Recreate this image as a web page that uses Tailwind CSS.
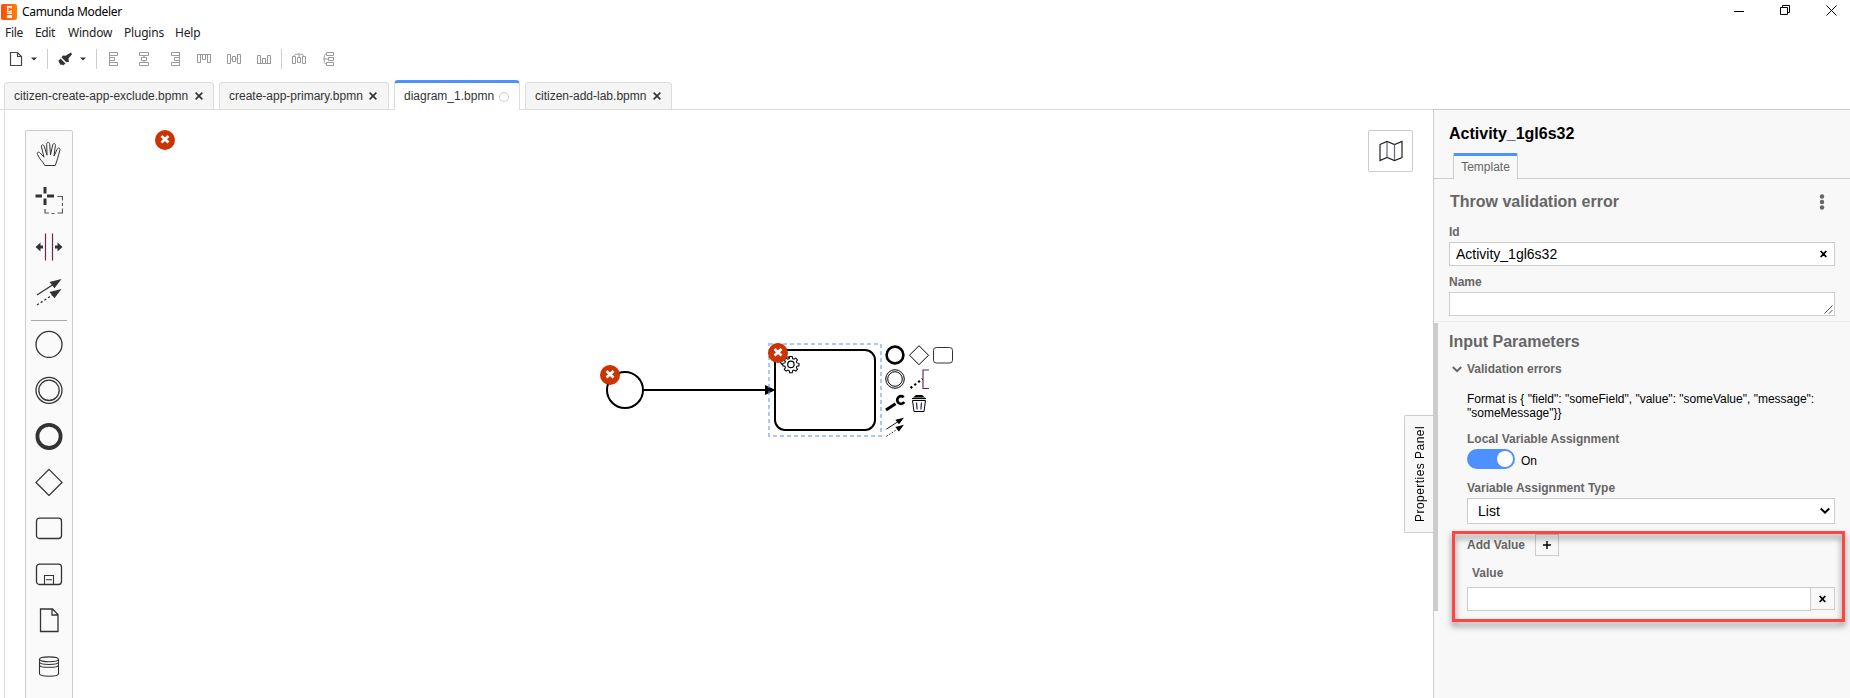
<!DOCTYPE html>
<html lang="en">
<head>
<meta charset="utf-8">
<title>Camunda Modeler</title>
<script src="https://cdn.jsdelivr.net/npm/@tailwindcss/browser@4"></script>
</head>
<body class="w-[1850px] h-[698px] overflow-hidden bg-white font-['Liberation_Sans',Arial,sans-serif] text-xs text-[#444] flex flex-col">
<svg class="hidden">
  <symbol id="err" viewBox="0 0 20 20"><circle cx="10" cy="10" r="10" fill="#cc3300" stroke="none"/><path d="M6.500 6l7 6.600M13.500 6l-7 6.600" stroke="#fff" stroke-width="2.700"/></symbol>
  <symbol id="connect" viewBox="0 0 28 28"><path d="M2 17L19 6" stroke="#333" stroke-width="1.3"/><path d="M26.500 1L14.500 4l5 6.200z" fill="#333" stroke="none"/><path d="M2 27L19 16" stroke="#333" stroke-width="1.300" stroke-dasharray="2.200 2.200"/><path d="M26.500 11L14.500 14l5 6.200z" fill="#333" stroke="none"/></symbol>
  <symbol id="close" viewBox="0 0 8 8"><path d="M.6 .6l6.800 6.800M7.400 .6L.6 7.400" stroke="#333" stroke-width="1.600"/></symbol>
</svg>

<!-- Title bar -->
<header class="h-[22px] flex items-center pl-[1px] text-black font-['Noto_Sans',sans-serif]">
  <svg width="16" height="16" viewBox="0 0 16 16" class="mt-px"><defs><linearGradient id="lg" x1="0" x2="1"><stop offset="0" stop-color="#ff4a0a"/><stop offset="1" stop-color="#ff8000"/></linearGradient></defs><rect width="16" height="16" rx="2" fill="url(#lg)"/><path d="M10.200 4.500V2.700H6.700v5h3.500V6.200" fill="none" stroke="#fff" stroke-width="1.400"/><path d="M6 9.500h5M6.500 11.500h4v2h-4z" stroke="#fff" stroke-width="1" fill="#fff"/></svg>
  <span class="ml-[5px] w-[110px] whitespace-nowrap text-[12px] tracking-[-0.330px] pt-px">Camunda Modeler</span>
  <div class="ml-auto flex items-center gap-[35px] pr-[13px] -mt-px">
    <svg width="10" height="11" viewBox="0 0 10 11"><path d="M0 6.500h10" stroke="#000"/></svg>
    <svg width="11" height="11" viewBox="0 0 11 11" fill="none" stroke="#000" class="ml-[1px]"><path d="M.5 2.500h7v7h-7z M2.500 2.500v-2h7v7h-2"/></svg>
    <svg width="11" height="11" viewBox="0 0 11 11" stroke="#000"><path d="M.5 .5l10 10M10.500 .5l-10 10"/></svg>
  </div>
</header>

<!-- Menu -->
<nav class="h-[22px] flex items-center pl-[5px] text-[12px] text-[#222] font-['Noto_Sans',sans-serif]">
  <span class="w-[30px] tracking-[-0.300px]">File</span><span class="w-[33px] tracking-[-0.400px]">Edit</span><span class="w-[56px] tracking-[-0.200px]">Window</span><span class="w-[51px] tracking-[-0.200px]">Plugins</span><span class="tracking-[-0.200px]">Help</span>
</nav>

<!-- Toolbar -->
<div class="h-[36px] shrink-0">
  <svg width="340" height="36" viewBox="0 44 340 36" fill="none" stroke="#999" stroke-width="1">
    <path d="M10.500 52.500h7l4 4v9h-11zM17.500 52.500v4h4" stroke="#444" stroke-width="1.200"/>
    <path d="M31 57.500h6l-3 3z M80 57.500h6l-3 3z" fill="#333" stroke="none"/>
    <path d="M47.500 49v20M96.500 49v20M281.500 49v20" stroke="#ccc"/>
    <path d="M71 52.500l1 1.700-3.600 4.300 .6 3.200-2.600.6-4.800-4.800 1.200-2 2.700.3z" fill="#333" stroke="none"/>
    <path d="M60.500 58.500l5 5-2.500 2-4.400-4.800zM58.500 60l3.500 4.600-1.400.4-2-3.600z" fill="#333" stroke="none"/>
    <path d="M109.500 52v14M109.500 52.500h8v3h-8M109.500 57.500h5v3h-5M109.500 62.500h8v3h-8"/>
    <path d="M139.500 52.500h9v3h-9zM141.500 57.500h5v3h-5zM139.500 62.500h9v3h-9zM144 55.500v2M144 60.500v2"/>
    <path d="M179.500 52v14M179.500 52.500h-8v3h8M179.500 57.500h-5v3h5M179.500 62.500h-8v3h8"/>
    <path d="M197 54.500h14M197.500 54.500v8h3v-8M202.500 54.500v5h3v-5M207.500 54.500v8h3v-8"/>
    <path d="M227.500 54.500h3v9h-3zM232.500 56.500h3v5h-3zM237.500 54.500h3v9h-3zM230.500 59h2M235.500 59h2"/>
    <path d="M257 63.500h14M257.500 63.500v-8h3v8M262.500 63.500v-5h3v5M267.500 63.500v-8h3v8"/>
    <path d="M292.500 56.500h3v7h-3zM297.500 57.500h3v5h-3zM302.500 56.500h3v7h-3zM294 56.500q0-2.500 5-2.500t5 2.500M299 54v3.500"/>
    <path d="M326.500 52.500h7v3h-7zM328.500 57.500h5v3h-5zM326.500 62.500h7v3h-7zM326.500 54q-2.500 0-2.500 5t2.500 5M324 59h4.500"/>
  </svg>
</div>

<!-- Tabs -->
<div class="h-[30px] shrink-0 flex items-end pl-1 gap-[5px] border-b border-[#ddd] text-[#333] whitespace-nowrap">
  <div class="w-[210px] h-[27px] bg-[#f5f5f5] border border-b-0 border-[#ddd] rounded-t-sm flex items-center pl-[9px]"><span class="w-[181px]">citizen-create-app-exclude.bpmn</span><svg width="8" height="8"><use href="#close"/></svg></div>
  <div class="w-[170px] h-[27px] bg-[#f5f5f5] border border-b-0 border-[#ddd] rounded-t-sm flex items-center pl-[9px]"><span class="w-[140px]">create-app-primary.bpmn</span><svg width="8" height="8"><use href="#close"/></svg></div>
  <div class="w-[126px] h-[30px] -mb-px bg-white border border-b-0 border-t-[3px] border-[#ddd] border-t-[#4d90ff] rounded-t-sm flex items-center pl-[9px] pb-px"><span class="w-[95px]">diagram_1.bpmn</span><i class="size-[10px] rounded-full border border-[#ccc] mt-px"></i></div>
  <div class="w-[147px] h-[27px] bg-[#f5f5f5] border border-b-0 border-[#ddd] rounded-t-sm flex items-center pl-[9px]"><span class="w-[118px]">citizen-add-lab.bpmn</span><svg width="8" height="8"><use href="#close"/></svg></div>
</div>

<main class="flex flex-1 min-h-0 pl-1">
  <!-- Diagram canvas -->
  <section class="relative flex-1 border-l border-[#ddd] overflow-hidden">
    <div class="absolute left-[20px] top-5 w-[48px] h-[600px] bg-[#fafafa] border border-[#ccc] rounded-xs flex flex-col items-center">
      <div class="h-[46px] flex items-center"><svg width="28" height="28" viewBox="0 0 28 28" fill="none" stroke="#333" stroke-width="1" stroke-linejoin="round"><path d="M9.800 25.500C8 21.500 5 20 2.500 14.500c-1-2 1.300-3.300 2.800-1.400L9 17.200 6.500 7c-.6-2.400 2-3 2.700-.8l2.800 9L11.700 4.300c0-2.500 2.900-2.500 3 0l.8 10.600L17.700 5c.5-2.200 3-1.700 2.700.5L19 16l3.200-6.800c1-2 3.200-1.200 2.700.9C23.500 15.500 22 21 20.200 25.500z"/></svg></div>
      <div class="h-[46px] flex items-center"><svg width="28" height="28" viewBox="0 0 28 28" fill="none" stroke="#333"><path d="M.5 10h6.500M12 10h7M10 1v6.500M10 12.500v6.500" stroke-width="3"/><path d="M22.500 10.500h5v4M27.500 17v3M27.500 22.500v4.500h-5M19.500 27.500h-3M14 27h-4v-4" stroke-width="1.200" stroke="#555"/></svg></div>
      <div class="h-[46px] flex items-center pt-px"><svg width="28" height="28" viewBox="0 0 28 28"><path d="M10.500 .5v27M17.500 .5v27" stroke="#702650" stroke-width="1.200"/><path d="M.5 14l5-4.500v3H8v3H5.500v3zM27.500 14l-5-4.500v3H20v3h2.500v3z" fill="#333"/></svg></div>
      <div class="h-[46px] flex items-center"><svg width="28" height="28"><use href="#connect"/></svg></div>
      <div class="w-[36px] h-px bg-[#aaa] mt-[5px]"></div>
      <div class="h-[46px] flex items-center"><svg width="28" height="28" fill="none" stroke="#333"><circle cx="14" cy="14.400" r="13" stroke-width="1.300"/></svg></div>
      <div class="h-[46px] flex items-center"><svg width="28" height="28" fill="none" stroke="#333"><circle cx="14" cy="14.300" r="13" stroke-width="1.300"/><circle cx="14" cy="14.300" r="10.200" stroke-width="1.300"/></svg></div>
      <div class="h-[46px] flex items-center"><svg width="28" height="28" fill="none" stroke="#333"><circle cx="14" cy="14.400" r="11.600" stroke-width="3.800"/></svg></div>
      <div class="h-[46px] flex items-center"><svg width="28" height="28" fill="none" stroke="#333"><path d="M14 1.400l13 13-13 13-13-13z" stroke-width="1.300"/></svg></div>
      <div class="h-[46px] flex items-center"><svg width="28" height="28" fill="none" stroke="#333"><rect x="1.500" y="4.200" width="25" height="20.300" rx="3" stroke-width="1.300"/></svg></div>
      <div class="h-[46px] flex items-center"><svg width="28" height="28" fill="none" stroke="#333" stroke-width="1.300"><rect x="1.500" y="4.200" width="25" height="20.300" rx="3"/><path d="M9.500 24.500v-9h9v9M11 19.700h6" stroke-width="1.100"/></svg></div>
      <div class="h-[46px] flex items-center"><svg width="28" height="28" fill="none" stroke="#333"><path d="M5.500 3h12l5.500 5.500v17H5.500zM17 3v6h6" stroke-width="1.300"/></svg></div>
      <div class="h-[46px] flex items-center"><svg width="28" height="28" fill="none" stroke="#333"><path d="M4.500 7.300v14.500c0 3.300 19 3.300 19 0V7.300M4.500 7.300c0-3.200 19-3.200 19 0s-19 3.200-19 0M4.500 10.100c0 3.200 19 3.200 19 0M4.500 12.900c0 3.200 19 3.200 19 0" stroke-width="1.100"/></svg></div>
    </div>

    <svg class="absolute left-[-1px] top-0" width="1400" height="588" viewBox="4 110 1400 588" fill="none" stroke="#000">
      <circle cx="625" cy="390" r="18" stroke-width="2" fill="#fff"/>
      <path d="M643 390h125" stroke-width="2"/>
      <path d="M765 385l10.500 5-10.500 5z" fill="#000" stroke="none"/>
      <rect x="775" y="350" width="100" height="80" rx="10" stroke-width="2"/>
      <rect x="769" y="344" width="112" height="92" stroke="#4d90ff" stroke-opacity=".5" stroke-width="2" stroke-dasharray="4 3"/>
      <g stroke-width="1.200" fill="#fff">
        <path d="M782.500 365l-2-2.500 1.500-2.500 2.500.6 1-.6.500-3h3l.6 2.500 1.500.8 2.400-.8"/>
        <path transform="translate(790.900 364.400) scale(.87) translate(-790.900 -365.800)" d="M789.400 356.800h3l.5 2.300 1.500.7 2-1.200 2 2-1.200 2 .6 1.500 2.400.5v2.900l-2.400.5-.6 1.500 1.300 2-2 2-2.100-1.200-1.500.6-.5 2.400h-3l-.5-2.400-1.500-.6-2 1.200-2.100-2 1.300-2-.6-1.500-2.400-.5v-2.900l2.400-.5.6-1.500-1.300-2 2.100-2 2 1.200 1.500-.7z"/>
        <circle cx="790.900" cy="364.400" r="3.200"/>
      </g>
      <svg x="155" y="130" width="20" height="20"><use href="#err"/></svg>
      <svg x="600" y="365" width="20" height="20"><use href="#err"/></svg>
      <svg x="768" y="343" width="20" height="20"><use href="#err"/></svg>
      <circle cx="895" cy="355" r="8.400" stroke-width="2.600"/>
      <path d="M919 345.700l9.500 9.500-9.500 9.500-9.500-9.500z"/>
      <rect x="933.500" y="347.500" width="19" height="15.500" rx="2.800" stroke="#333"/>
      <circle cx="895" cy="379" r="9.300"/><circle cx="895" cy="379" r="7.300"/>
      <path d="M929 370h-6v18.500h6" stroke="#502650" stroke-width="1.100"/><path d="M910.500 388l12-9" stroke-width="2.200" stroke-dasharray="2.200 2.600"/>
      <path d="M886 410l9.500-6.300" stroke-width="3"/><path d="M903.700 397.300a3.800 3.800 0 1 0 .5 4.800" stroke-width="2.700"/>
      <path d="M912.500 400.500h13l-1.500 11h-10z"/><path d="M912 398.500h14" stroke-width="1.200"/><path d="M913 397.500l3-2.500h6l3 2.500z" fill="#000" stroke="none"/><path d="M916.500 402.500l.6 7M921.500 402.500l-.6 7" stroke-width="1.300" stroke="#335"/>
      <svg x="885" y="417" width="20" height="20" class="brightness-0"><use href="#connect"/></svg>
    </svg>

    <div class="absolute left-[1363px] top-5 w-[45px] h-[42px] border border-[#ccc] rounded-xs bg-white flex items-center justify-center">
      <svg width="24" height="22" fill="none" stroke="#222" stroke-width="1.200"><path d="M1 4.500l7-3 7.500 3 7.500-3v16l-7.500 3-7.500-3-7 3z"/><path d="M8 2v15.500M15.500 4.500v15.500" stroke="#668"/></svg>
    </div>
    <div class="absolute left-[1399px] top-[305px] w-[31px] h-[118px] border border-r-0 border-[#ccc] bg-[#f8f8f8] rounded-l-xs flex items-center justify-center">
      <span class="[writing-mode:vertical-rl] rotate-180 text-black text-[12px] leading-[14px] tracking-[0.450px]">Properties Panel</span>
    </div>
  </section>

  <!-- Properties panel -->
  <aside class="relative w-[417px] shrink-0 border-l border-[#ccc] bg-[#f8f8f8] -mt-px border-t text-[#666] whitespace-nowrap">
    <div class="absolute left-0 top-[213px] w-1 h-[288px] bg-[#ccc]"></div>
    <div class="h-[43px] pl-[15px] pt-[15px] text-[16px] leading-[18px] font-bold text-black">Activity_1gl6s32</div>
    <div class="h-[26px] pl-[19px] border-b border-[#ccc]">
      <div class="w-[65px] h-[26px] border-x border-t-[3px] border-[#ccc] border-t-[#4d90ff] rounded-t-xs bg-[#f8f8f8] text-center leading-[22px]">Template</div>
    </div>
    <div class="h-[143px] pl-[15px] pr-[15px] border-b border-[#ececec] flex flex-col">
      <div class="h-[45px] flex items-center justify-between text-[16px] font-bold pl-px pr-[10px]"><span>Throw validation error</span><svg width="6" height="16" fill="#666"><circle cx="3" cy="2.500" r="2.200"/><circle cx="3" cy="8" r="2.200"/><circle cx="3" cy="13.500" r="2.200"/></svg></div>
      <div class="h-[18px] leading-[16px] font-bold">Id</div>
      <div class="h-6 bg-white border border-[#ccc] flex items-center justify-between pl-[6px] pr-[7px] text-[14px] text-black"><span>Activity_1gl6s32</span><svg width="7" height="8" viewBox="0 0 7 8"><path d="M.7 1l5.600 6M6.300 1L.7 7" stroke="#000" stroke-width="1.800"/></svg></div>
      <div class="h-[26px] pt-[8px] leading-[16px] font-bold">Name</div>
      <div class="h-6 bg-white border border-[#ccc] flex justify-end items-end p-px"><svg width="9" height="9" stroke="#555"><path d="M.5 8.500l8-8M5 8.500L8.500 5"/></svg></div>
    </div>
    <div class="pl-[15px] pr-[15px] flex flex-col">
      <div class="h-[39px] leading-[40px] text-[16px] font-bold">Input Parameters</div>
      <div class="h-[22px] pb-[6px] flex items-center font-bold pl-[3px]"><svg width="10" height="7" fill="none" stroke="#666" stroke-width="2"><path d="M.8 1L5 5.200 9.200 1"/></svg><span class="ml-[5px]">Validation errors</span></div>
      <div class="pl-[18px] flex flex-col">
        <div class="h-[48px] pt-[9px] leading-[14px] text-black">Format is { "field": "someField", "value": "someValue", "message":<br>"someMessage"}}</div>
        <div class="h-[18px] leading-[16px] font-bold">Local Variable Assignment</div>
        <div class="h-[20px] flex"><div class="w-[48px] h-[20px] rounded-full bg-[#4d90ff] flex justify-end p-[2px]"><i class="size-4 rounded-full bg-white"></i></div><span class="ml-[6px] leading-[24px] text-black">On</span></div>
        <div class="h-[29px] pt-[11px] leading-[16px] font-bold">Variable Assignment Type</div>
        <div class="h-[26px] bg-white border border-[#ccc] flex items-center justify-between pl-[10px] pr-[4px] text-[14px] text-black"><span>List</span><svg width="10" height="8" fill="none" stroke="#000" stroke-width="2"><path d="M.8 1.500L5 5.700l4.200-4.200"/></svg></div>
        <div class="h-[42px] pt-[10px] flex items-start"><span class="w-[68px] font-bold leading-[22px]">Add Value</span><div class="w-6 h-[22px] border border-[#ccc] flex items-center justify-center"><svg width="8" height="8" stroke="#000" stroke-width="1.400"><path d="M0 4h8M4 0v8"/></svg></div></div>
        <div class="h-[21px] pl-[5px] leading-[14px] font-bold">Value</div>
        <div class="flex items-start"><div class="w-[344px] h-6 bg-white border border-[#ccc]"></div><div class="w-6 h-[23px] border border-l-0 border-[#ccc] flex items-center justify-center"><svg width="7" height="8" viewBox="0 0 7 8"><path d="M.7 1l5.600 6M6.300 1L.7 7" stroke="#000" stroke-width="1.800"/></svg></div></div>
      </div>
    </div>
    <!-- Highlight frame -->
    <div class="absolute left-[18px] top-[421px] w-[393px] h-[91px] border-[3px] border-[#ff4444] drop-shadow-[0_4px_3px_rgb(0_0_0/0.5)]"></div>
  </aside>
</main>
</body>
</html>
